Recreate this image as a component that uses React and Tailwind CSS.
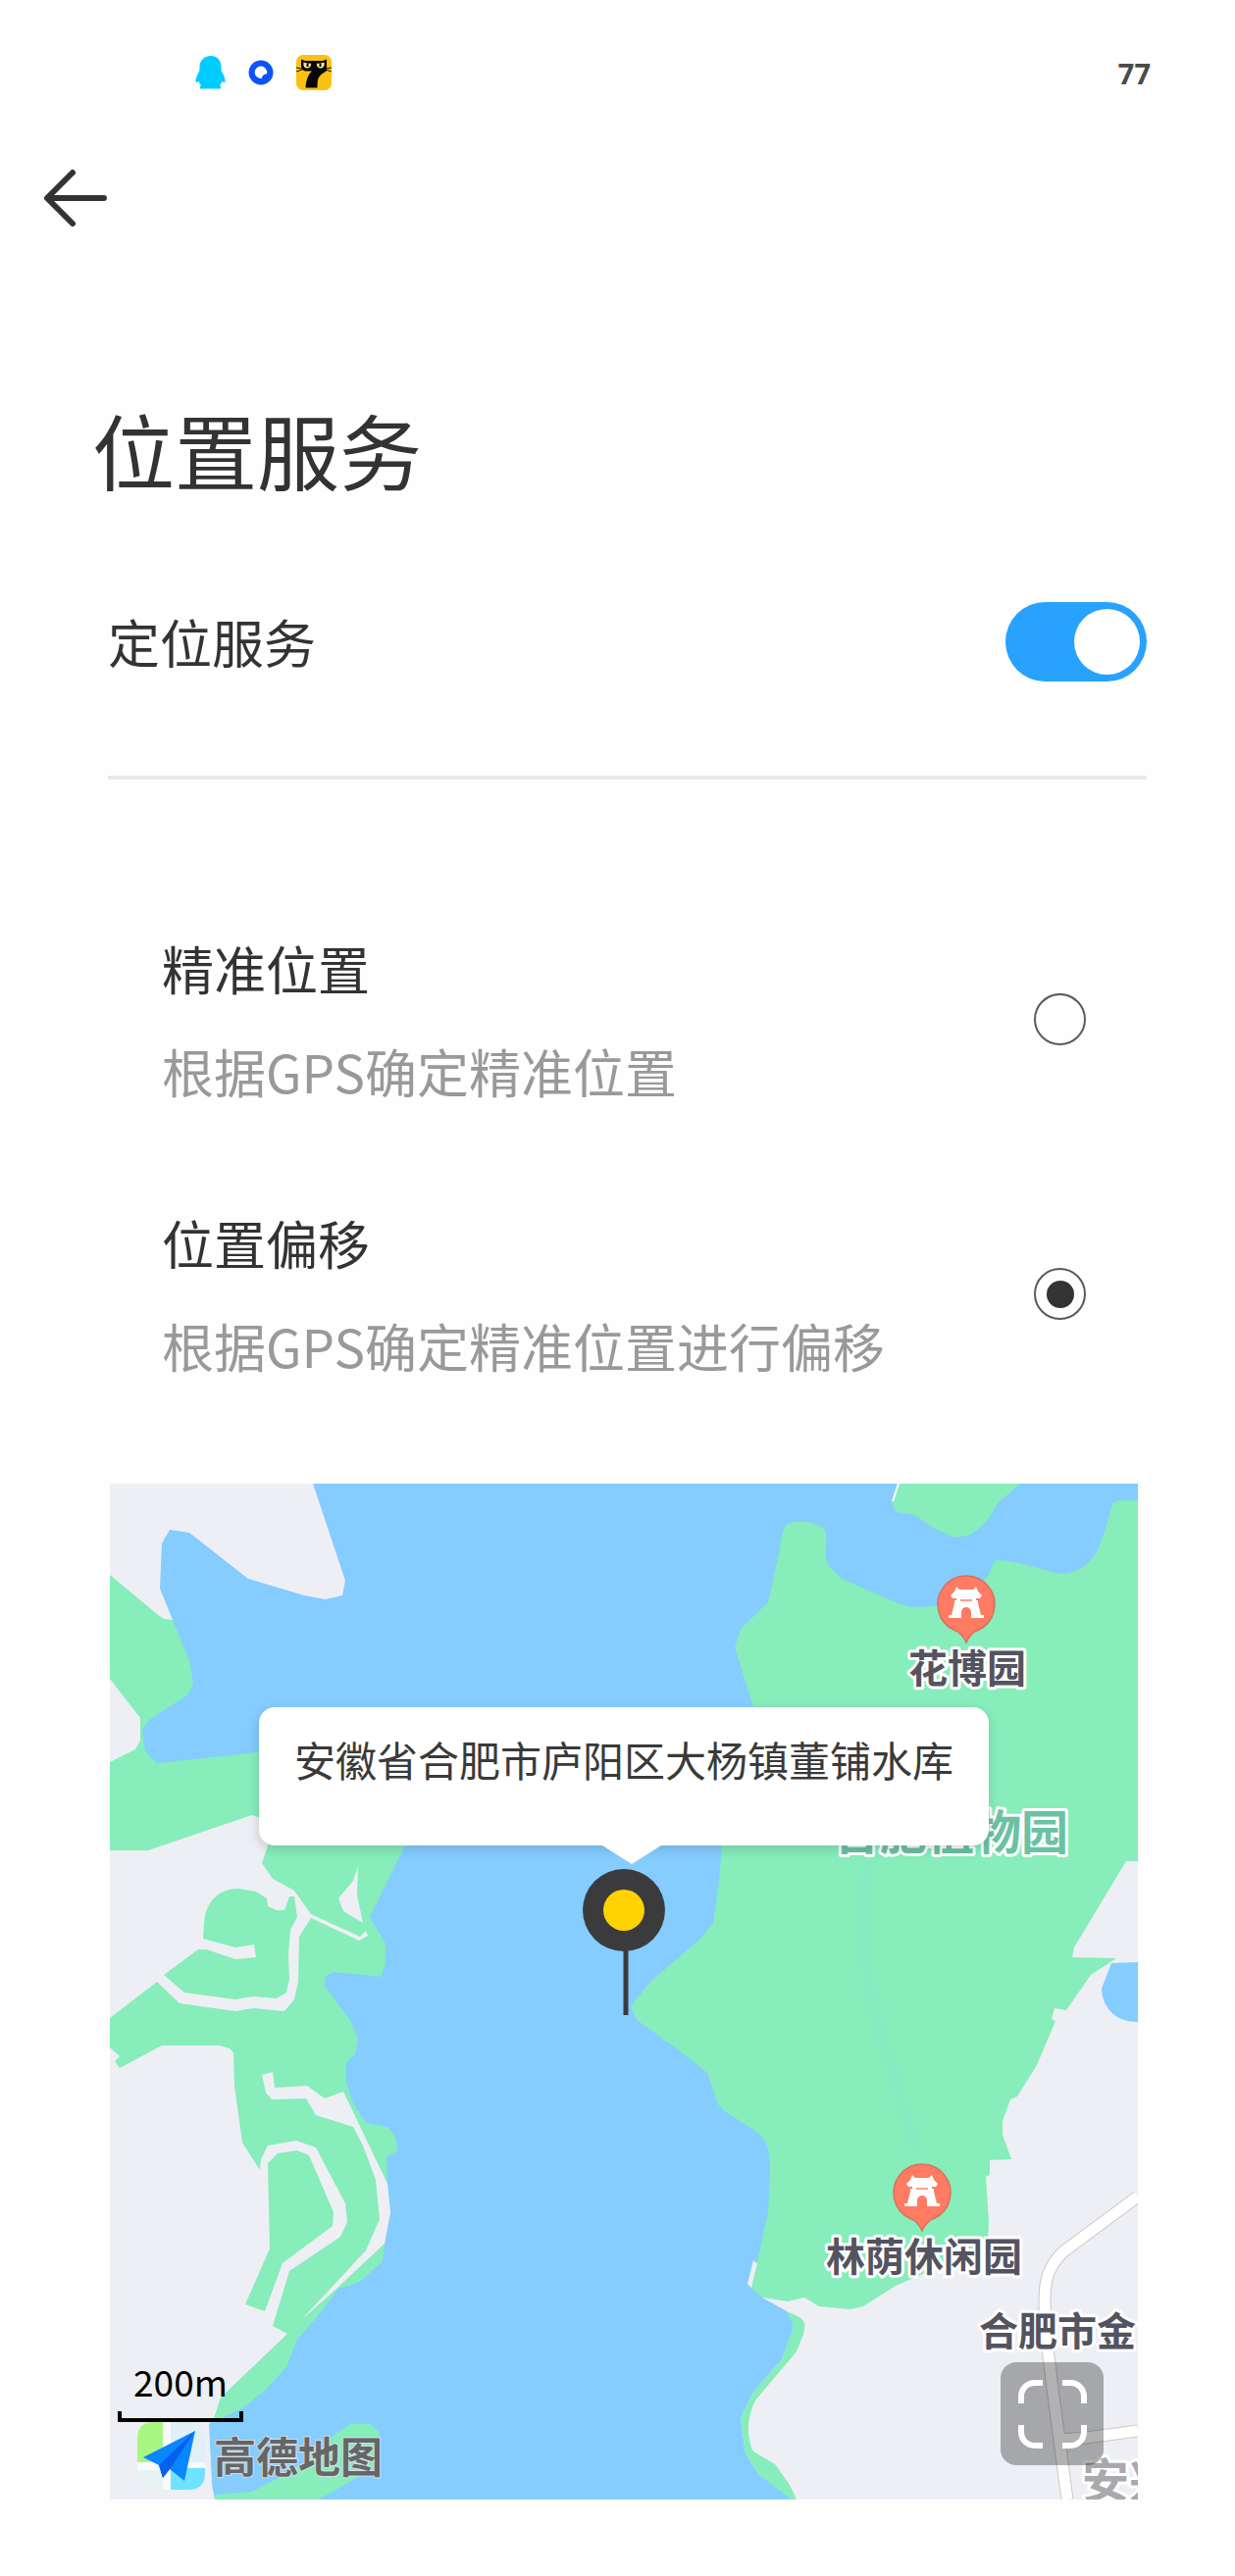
import React, { useState } from 'react';

const OPTIONS = [
  { id: 'exact', title: '精准位置', desc: '根据GPS确定精准位置' },
  { id: 'offset', title: '位置偏移', desc: '根据GPS确定精准位置进行偏移' },
];

const LAND = '#eeeff4';
const PARK = '#86edbb';
const WATER = '#85ccff';

function StatusBar() {
  return (
    <div className="flex h-[148px] items-center justify-between pl-[198px] pr-[86px]">
      <div className="flex items-center gap-[23px]">
        <svg viewBox="0 0 32 36" className="h-9 w-8" aria-hidden="true">
          <path
            d="M17 1C23 1 27 5 27.500 11C27.500 14 27.500 15 28 17C30 20 31.500 24 31.500 27C31 29 30 28.500 28.500 26.500C28 29 27 30 26 31C27 32 27.500 33 27 34.500H6C5.500 33 6 32 7 31C6 30 5 29 4.500 26.500C3 28.500 2 29 1.500 27C1.500 24 3 20 5 17C5.500 15 5.500 14 5.500 11C6 5 11 1 17 1Z"
            fill="#00cdff"
          />
        </svg>
        <svg viewBox="0 0 26 26" className="size-[26px]" aria-hidden="true">
          <circle cx="13" cy="13" r="12.500" fill="#0d53f5" />
          <path d="M13 6.500a6.200 6.200 0 1 0 1 12.300c0-2.500 2-4.500 5-4.600A6.200 6.200 0 0 0 13 6.500Z" fill="#fff" />
        </svg>
        <svg viewBox="0 0 36 36" className="size-9" aria-hidden="true">
          <rect width="36" height="36" rx="7" fill="#fbc110" />
          <path
            d="M5 4.500L9 6H27L31 4.500V16C29 18 25 19 22.500 24C21.500 27 21.500 30 21.500 33.500H9.500C10 26 12 20 16 16.500H9C6.500 16 5 14 5 11Z"
            fill="#050505"
          />
          <path d="M0 13L6 14M0 17L6 15M36 13L30 14M36 17L30 15" stroke="#1c1600" strokeWidth="1" />
          <path d="M7.500 7.500C7 11 8 13.500 11 13.500S15.500 11 15 8.500C13 9 10 8.500 7.500 7.500Z" fill="#f3e79a" />
          <path d="M28.500 7.500C29 11 28 13.500 25 13.500S20.500 11 21 8.500C23 9 26 8.500 28.500 7.500Z" fill="#f3e79a" />
          <path d="M11.500 8.500V12M24.500 8.500V12" stroke="#050505" strokeWidth="2" />
        </svg>
      </div>
      <span className="font-['Open_Sans',sans-serif] text-[29px] leading-none font-bold text-[#4a4a4a]">77</span>
    </div>
  );
}

// Pin with a small gate tower, drawn around the centre of its disc
function ParkPin({ x, y }) {
  return (
    <g transform={`translate(${x} ${y})`}>
      <path
        d="M0 39C-3 32 -7 28 -12 26.500A29 29 0 1 1 12 26.500C7 28 3 32 0 39Z"
        fill="#ff7b63"
        stroke="#d9715f"
        strokeWidth="1.500"
      />
      <path
        d="M-10 -18L-7 -15H7L10 -18L12 -13L16 -9L14 -6H10V-4H12V-1L15 11H18V14H5V8A5 5 0 0 0 -5 8V14H-18V11H-15L-12 -1V-4H-10V-6H-14L-16 -9L-12 -13Z"
        fill="#fff"
      />
      <path d="M-6 -4H6" stroke="#ff7b63" strokeWidth="1.500" />
    </g>
  );
}

function MapCanvas() {
  return (
    <svg viewBox="0 0 1048 1036" className="block h-auto w-full" role="img" aria-label="地图">
      <rect width="1048" height="1036" fill={WATER} />

      {/* west bank */}
      <path
        d="M0 90L48 130L64 139L81 180L85 203L80 215L40 241L33 251L36 273L48 285L150 274L330 260L300 371L265 442L281 469V490L276 503L228 498L220 503L219 512L245 547L253 566L250 582L241 591V611L248 632L261 652L283 656L290 664L294 680L282 687L283 714L286 743L280 778L278 793L255 814L233 821L211 850L191 873L180 901L158 925L135 943L101 959L104 1021L107 1036H0Z"
        fill={PARK}
      />
      <path
        d="M0 0H207L240 99L237 114L220 118L198 114L141 97L81 50L61 47L53 61L51 107L64 139L55 138L48 133L0 93Z"
        fill={LAND}
      />
      <path d="M0 199L31 239V262L26 271L0 284Z" fill={LAND} />
      <path
        d="M0 374H39L145 338L161 344V369L155 387L166 403L188 415L205 439L255 462L261 456L263 461L254 466L205 443L193 462L192 508L188 526L178 538L146 535L128 538L71 530L48 508L0 545Z"
        fill={LAND}
      />
      <path
        d="M183 421H188L191 442L184 455L182 480L183 505L180 519L170 525L146 523L128 526L76 519L55 501L90 475H98L128 485L149 483L147 470L128 473L95 464L96 448C98 425 112 413 131 413L149 416L160 423L161 431L170 435H178Z"
        fill={PARK}
      />
      <path d="M253 390L252 419L258 448L238 436L233 423L248 405Z" fill={LAND} />
      <path
        d="M0 575L10 584L5 589L10 596L53 573H111L122 576L126 580L127 614L135 672L153 700L154 689L161 675L190 670L210 677L240 734L242 753L235 768L183 803L166 859L181 867L113 932L106 953L101 959L104 1021L107 1036H0Z"
        fill={LAND}
      />
      <path d="M161 693L171 683L191 680L203 685L228 743L227 757L176 795L158 844L138 837L163 780Z" fill={PARK} />
      <path
        d="M155 603L166 600L168 616L201 614L219 627L238 620L261 668L283 714L286 743L280 775L231 821L195 853L261 782L275 750L271 710L258 675L248 656L210 644L200 627L165 628L159 621Z"
        fill={LAND}
      />
      <path d="M107 1031L145 1028L185 1007L215 985L228 971L245 959H265L275 968L273 1001L245 1018L213 1036H107Z" fill={PARK} />

      {/* east bank */}
      <path
        d="M1048 385H850L700 780L665 830L690 844L696 855V864L685 893L655 928L643 953L648 989L661 1010L691 1032L695 1036H1048Z"
        fill={LAND}
      />
      <path
        d="M1048 17H1031C1025 17 1022 20 1021 24C1016 42 1012 58 1005 71C995 86 984 91 971 92C955 90 925 78 903 78C897 85 898 95 891 98L861 119C850 125 825 128 810 124C785 115 770 107 748 98C738 90 730 83 730 73C730 55 733 46 723 43C715 38 700 37 692 41C686 42 685 55 683 66L671 121L643 148L637 167L656 228L624 369L621 405L615 448L601 465L551 508L531 533L537 547L583 580L609 601L620 633L628 641L658 660C670 668 673 680 673 700L671 743L660 793L651 818L665 830L691 834L708 830L723 839L755 842L768 839L801 818L831 805L895 778L896 753L893 707L897 705V690L919 689L910 664V650L918 628L925 625L945 593L964 548L960 546L963 535L975 537L1000 501L1026 484L981 483L983 473L1036 385H1048Z"
        fill={PARK}
      />
      <path d="M775 380C762 450 768 520 795 590L822 680" fill="none" stroke="#86ecc0" strokeWidth="14" />
      <path d="M805 0L797 19L801 29L820 32L841 46L861 55L875 53C885 48 890 42 895 37L906 19L928 0Z" fill={PARK} />
      <path d="M804 0L798 18" stroke="#fff" strokeWidth="2" />
      <path d="M656 792L660 795L654 820L650 816Z" fill={LAND} />
      <path
        d="M690 844L703 850C709 854 710 860 706 870L700 885L658 935C648 955 650 975 656 987L678 1000L693 1021L700 1036H695L661 1010L648 989L643 953L655 928L685 893L696 864V855Z"
        fill={PARK}
      />
      <path d="M1048 488L1021 489L1011 515C1012 535 1025 549 1048 549Z" fill={WATER} />

      {/* roads */}
      <g fill="none">
        <path d="M1048 727L971 784C956 800 953 812 953 835C953 870 957 885 960 915L976 1036M968 975L995 973L1048 966" stroke="#c9c9ce" strokeWidth="13" />
        <path d="M1048 727L971 784C956 800 953 812 953 835C953 870 957 885 960 915L976 1036M968 975L995 973L1048 966" stroke="#fff" strokeWidth="11" />
      </g>

      <ParkPin x={873} y={123} />
      <ParkPin x={828} y={723} />

      <g
        className="font-['Noto_Sans_CJK_SC',sans-serif] text-[40px] font-bold"
        fill="#53545f"
        stroke="#fff"
        strokeWidth="6"
        strokeLinejoin="round"
        paintOrder="stroke"
      >
        <text x="874" y="203" textAnchor="middle">花博园</text>
        <text x="830" y="803" textAnchor="middle">林荫休闲园</text>
        <text x="886" y="879">合肥市金</text>
        <g className="text-[48px]">
          <text x="737" y="373" fill="#6ac2a3">合肥植物园</text>
          <text x="991" y="1034" fill="#a9a9ad">安兴</text>
        </g>
      </g>

      {/* scale */}
      <text x="72" y="931" textAnchor="middle" className="font-['Noto_Sans_CJK_SC',sans-serif] text-[37px]" fill="#000">200m</text>
      <path d="M10 946V955H134V946" fill="none" stroke="#000" strokeWidth="4" />

      {/* provider mark */}
      <rect x="28" y="957" width="69" height="69" rx="16" fill="#f7fbfc" />
      <path d="M28 998V973C28 963 34 957 44 957H54V998Z" fill="#a9f783" />
      <path d="M62 957H81C91 957 97 963 97 973V998H62Z" fill="#dff0f7" />
      <path d="M62 1004H97V1010C97 1020 91 1026 81 1026H62Z" fill="#6fe2ff" />
      <path d="M28 1006H54V1026H44C34 1026 28 1020 28 1010Z" fill="#e9f2f2" />
      <path d="M34 993L87 966L76 1017L61 1005L54 1014L50 1001Z" fill="#0a86ff" />
      <path d="M50 1001L87 966L61 1005L54 1014Z" fill="#0560ee" />
      <text
        x="106"
        y="1009"
        className="font-['Noto_Sans_CJK_SC',sans-serif] text-[43px] font-bold"
        fill="#656668"
        stroke="#d5dde2"
        strokeWidth="2"
        paintOrder="stroke"
      >
        高德地图
      </text>

      {/* current position */}
      <path d="M526 470V542" stroke="#3b3b3e" strokeWidth="5" />
      <circle cx="524" cy="435" r="42" fill="#3b3b3e" />
      <circle cx="524" cy="435" r="21" fill="#ffd200" />
    </svg>
  );
}

function LocationMap() {
  return (
    <div className="relative mt-[105px] mr-[99px] ml-28 overflow-hidden">
      <MapCanvas />
      <div className="absolute top-[22%] left-1/2 h-[141px] -translate-x-1/2 rounded-2xl bg-white px-9 pt-[23px] shadow-[0_4px_12px_rgba(0,0,0,0.15)]">
        <p className="text-[42px] leading-[60px] whitespace-nowrap text-[#3a3a3a]">安徽省合肥市庐阳区大杨镇董铺水库</p>
        <svg viewBox="0 0 60 19" className="absolute top-full left-1/2 -ml-[22px] h-[19px] w-[60px]" aria-hidden="true">
          <path d="M0 0H60L30 19Z" fill="#fff" />
        </svg>
      </div>
      <button
        type="button"
        aria-label="全屏"
        className="absolute right-[35px] bottom-[35px] flex size-[105px] items-center justify-center rounded-2xl bg-black/30"
      >
        <svg viewBox="0 0 72 72" className="size-[72px]" fill="none" stroke="#fff" strokeWidth="6" aria-hidden="true">
          <path d="M4 25V18C4 10 10 4 18 4H26M46 4H54C62 4 68 10 68 18V25M68 47V54C68 62 62 68 54 68H46M26 68H18C10 68 4 62 4 54V47" />
        </svg>
      </button>
    </div>
  );
}

export default function App() {
  const [enabled, setEnabled] = useState(true);
  const [mode, setMode] = useState('offset');

  return (
    <div className="min-h-screen bg-[#fefefe] pb-[78px] font-['Noto_Sans_CJK_SC',sans-serif] text-[#333]">
      <StatusBar />

      <header className="flex h-[108px] items-center pl-[42px]">
        <button type="button" aria-label="返回">
          <svg viewBox="0 0 70 64" className="h-16 w-[70px]" fill="none" stroke="#333" strokeWidth="6" strokeLinecap="round" strokeLinejoin="round" aria-hidden="true">
            <path d="M32 6L6 32L32 58M7 32H64" />
          </svg>
        </button>
      </header>

      <main>
        <h1 className="mt-[152px] ml-[94px] text-[84px] leading-[100px]">位置服务</h1>

        <div className="mt-[106px] mr-[90px] ml-[110px] border-b-4 border-[#e9e9e9] pb-24">
          <label className="flex h-[81px] items-center justify-between text-[53px]">
            定位服务
            <input
              type="checkbox"
              role="switch"
              checked={enabled}
              onChange={(e) => setEnabled(e.target.checked)}
              className="flex h-[81px] w-36 appearance-none items-center rounded-full bg-gray-300 p-[7px] before:size-[67px] before:rounded-full before:bg-white checked:justify-end checked:bg-[#27a2ff]"
            />
          </label>
        </div>

        <fieldset className="mt-[156px] mr-[152px] ml-[165px] flex flex-col gap-[103px]">
          {OPTIONS.map((o) => (
            <label key={o.id} className="flex items-center justify-between">
              <span className="flex flex-col gap-[33px] text-[53px] leading-[72px]">
                <span>{o.title}</span>
                <span className="text-[#999]">{o.desc}</span>
              </span>
              <input
                type="radio"
                name="mode"
                value={o.id}
                checked={mode === o.id}
                onChange={() => setMode(o.id)}
                className="grid size-[53px] shrink-0 appearance-none place-content-center rounded-full border-2 border-[#5a5a5a] before:size-7 before:rounded-full checked:before:bg-[#333]"
              />
            </label>
          ))}
        </fieldset>

        <LocationMap />
      </main>
    </div>
  );
}
